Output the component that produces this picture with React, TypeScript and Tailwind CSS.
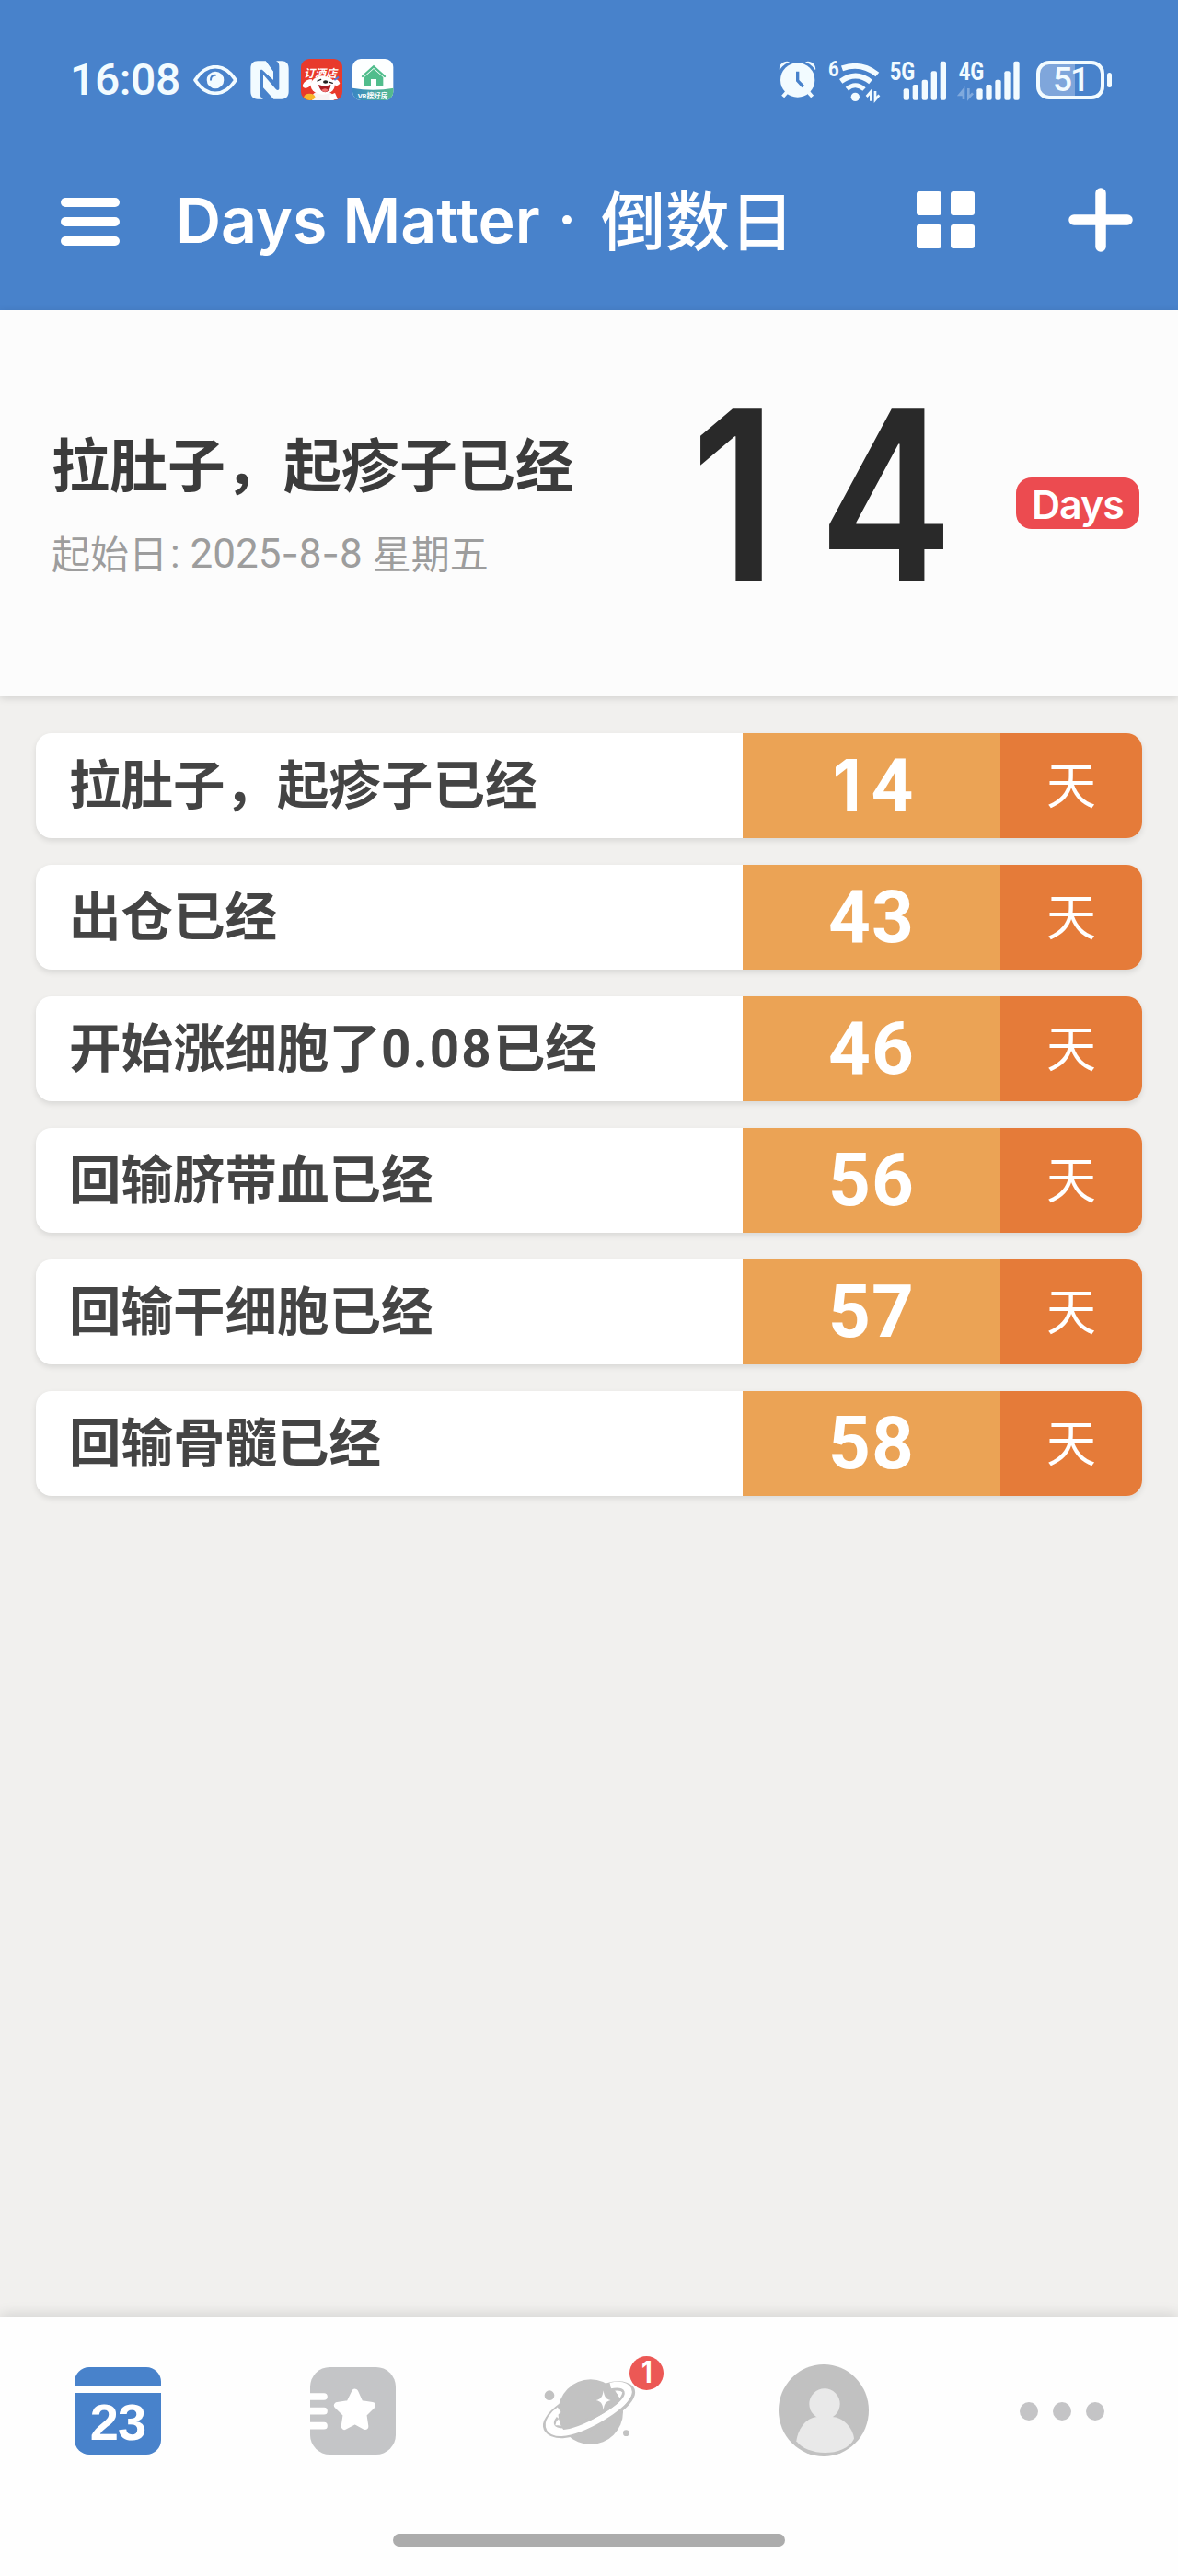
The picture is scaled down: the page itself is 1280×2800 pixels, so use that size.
import React from "react";

const events = [
  { title: "拉肚子，起疹子已经", days: "14" },
  { title: "出仓已经", days: "43" },
  { title: "开始涨细胞了0.08已经", days: "46" },
  { title: "回输脐带血已经", days: "56" },
  { title: "回输干细胞已经", days: "57" },
  { title: "回输骨髓已经", days: "58" },
];

function EyeIcon() {
  return (
    <svg className="ml-[15px] h-8 w-12" viewBox="0 0 144 96">
      <path d="M6 48C24 20 46 5 72 5s48 15 66 43c-18 28-40 43-66 43S24 76 6 48Z" fill="none" stroke="#f2fbff" strokeWidth="11" strokeLinejoin="round" />
      <circle cx="72" cy="48" r="28" fill="#f2fbff" />
      <path d="M57 47c0-9 6-15 15-15" fill="none" stroke="#4882cb" strokeWidth="6" strokeLinecap="round" />
    </svg>
  );
}

function NfcIcon() {
  return (
    <svg className="ml-[14px] h-[42px] w-[42px]" viewBox="0 0 126 126" fill="#f2fbff">
      <path d="M24 1H50L75 36V62L40 31C36 28 32 30 32 35V108C32 117 35 122 42 125H24C9 125 1 116 1 100V26C1 10 9 1 24 1Z" />
      <path d="M102 125H76L42 88V45L84 94C89 98 94 96 94 91V18C94 9 91 4 84 1H102C117 1 125 10 125 26V100C125 116 117 125 102 125Z" />
      <path d="M50 1L75 36V62L50 40Z" />
    </svg>
  );
}

function HotelAppIcon() {
  return (
    <svg className="ml-[13px] h-[45px] w-[45px]" viewBox="0 0 135 135">
      <defs>
        <clipPath id="hotel"><rect width="135" height="135" rx="27" /></clipPath>
      </defs>
      <g clipPath="url(#hotel)">
        <rect width="135" height="135" fill="#e83a2c" />
        <path d="M36 135c-2-22 10-30 35-29s38 8 36 29Z" fill="#f8f3f3" />
        <path d="M36 67C24 65 8 73 5 89c8 11 18 6 30-6ZM102 70c13-7 21-1 25 10-8 10-18 8-25 0Z" fill="#fff" />
        <ellipse cx="71" cy="86" rx="39" ry="30" fill="#fff" />
        <ellipse cx="80" cy="75" rx="8" ry="5" fill="#202020" />
        <path d="M54 72l11-5M94 76l9 3" stroke="#222" strokeWidth="4" strokeLinecap="round" />
        <path d="M57 84c15 5 26 5 40 0-2 33-33 33-40 0Z" fill="#a81d24" />
        <path d="M67 101c8-6 15-6 22 0-6 9-16 9-22 0Z" fill="#f17270" />
        <path d="M109 69l14-10" stroke="#5478d8" strokeWidth="6" />
        <ellipse cx="28" cy="124" rx="18" ry="11" fill="#f8b62c" />
        <path d="M94 118l17-7 9 20-25 4Z" fill="#fff" />
      </g>
      <text x="9" y="60" fill="#fff" fontSize="36" fontWeight="700" fontStyle="italic" fontFamily="Noto Sans CJK SC, sans-serif">订酒店</text>
    </svg>
  );
}

function HouseAppIcon() {
  return (
    <svg className="ml-[11px] h-[45px] w-[45px]" viewBox="0 0 135 135">
      <defs>
        <clipPath id="house"><rect width="133" height="135" rx="27" /></clipPath>
        <linearGradient id="strip"><stop stopColor="#3a86c4" /><stop offset="1" stopColor="#56bd8a" /></linearGradient>
      </defs>
      <g clipPath="url(#house)">
        <rect width="135" height="135" fill="#fdffff" />
        <path d="M0 95Q66 107 135 95V135H0Z" fill="url(#strip)" />
      </g>
      <path d="M33 57L69 25l36 32" fill="none" stroke="#50bd8c" strokeWidth="7" strokeLinecap="round" />
      <path d="M38 60L69 33l31 27v28H78V66H60v22H38Z" fill="#50bd8c" />
      <text x="17" y="128" textLength="98" fill="#fff" fontSize="23" fontWeight="700" fontFamily="Roboto, Noto Sans CJK SC, sans-serif">VR搜好房</text>
    </svg>
  );
}

function AlarmIcon() {
  return (
    <svg className="h-[41px] w-[41px]" viewBox="0 0 123 123">
      <path d="M31 98L14 117M93 98l17 19" stroke="#f2fbff" strokeWidth="12" />
      <circle cx="62" cy="63" r="56" fill="#f2fbff" />
      <path d="M3 31C-1 13 18-4 37 4 21 10 12 18 3 31ZM120 31c4-18-15-35-34-27 16 6 25 14 34 27Z" fill="#f2fbff" />
      <path d="M62 35v30l18 19" fill="none" stroke="#4882cb" strokeWidth="10" />
    </svg>
  );
}

function WifiIcon() {
  return (
    <svg className="ml-[12px] h-[46px] w-[58px] overflow-visible" viewBox="0 0 174 138" fill="none" stroke="#f2fbff">
      <text x="3" y="58" fill="#f2fbff" stroke="none" fontSize="72" fontWeight="700" fontFamily="Roboto, sans-serif" textLength="35" lengthAdjust="spacingAndGlyphs">6</text>
      <path d="M48 31Q111 8 163 51" strokeWidth="18" />
      <path d="M44 73Q94 37 141 75" strokeWidth="17" />
      <path d="M64 98Q92 74 120 99" strokeWidth="15" />
      <circle cx="91" cy="124" r="14" fill="#f2fbff" stroke="none" />
      <path d="M142 137V107l-14 16M156 105v28l13-15" strokeWidth="8" />
    </svg>
  );
}

function SignalIcon({ label, arrows }: { label: string; arrows?: boolean }) {
  const shift = arrows ? 14 : 0;
  return (
    <svg className={arrows ? "ml-[10px] h-[44px] w-[69px] overflow-visible" : "ml-[9px] h-[44px] w-[65px] overflow-visible"} viewBox={arrows ? "0 0 207 132" : "0 0 195 132"}>
      <text x="2" y="67" textLength="83" lengthAdjust="spacingAndGlyphs" fill="#f2fbff" fontSize="85" fontWeight="700" fontFamily="Roboto, sans-serif">{label}</text>
      <g fill="#f2fbff">
        <rect x={47 + shift} y="94" width="19" height="37" rx="6" />
        <rect x={77 + shift} y="81" width="19" height="50" rx="6" />
        <rect x={107 + shift} y="65" width="19" height="66" rx="6" />
        <rect x={137 + shift} y="37" width="19" height="94" rx="6" />
        <rect x={167 + shift} y="5" width="19" height="126" rx="6" />
      </g>
      {arrows && <path d="M18 129V98L5 114h13M34 93v31l14-15" stroke="#80aadd" strokeWidth="8" fill="none" />}
    </svg>
  );
}

function Battery() {
  return (
    <div className="ml-[16px] flex items-center gap-[3px]">
      <div className="flex h-[42px] w-[74px] items-center justify-center rounded-[14px] border-4 border-[#f2fbff] bg-[linear-gradient(90deg,#7fa6db_58%,#4882cb_58%)] font-[Roboto] text-[37px] font-medium leading-none text-[#f2fbff]">
        <span className="-mt-px -tracking-[2px]">51</span>
      </div>
      <div className="h-4 w-[5px] rounded-[3px] bg-[#f2fbff]" />
    </div>
  );
}

function StatusBar() {
  return (
    <div className="flex h-[174px] items-start justify-between pl-[76px] pr-[72px] pt-16">
      <div className="flex h-[45px] items-center">
        <span className="w-[119px] whitespace-nowrap font-[Roboto] text-[48px] font-medium leading-none tracking-[-0.4px] text-[#f2fbff]">16:08</span>
        <EyeIcon />
        <NfcIcon />
        <HotelAppIcon />
        <HouseAppIcon />
      </div>
      <div className="flex h-[45px] items-center">
        <AlarmIcon />
        <WifiIcon />
        <SignalIcon label="5G" />
        <SignalIcon label="4G" arrows />
        <Battery />
      </div>
    </div>
  );
}

function Header() {
  return (
    <header className="h-[337px] bg-[#4882cb]">
      <StatusBar />
      <div className="flex h-[130px] items-center pl-[66px] pr-[49px] text-white">
        <div className="flex w-16 flex-col gap-[11px] pt-1">
          <div className="h-[10px] rounded-full bg-white" />
          <div className="h-[10px] rounded-full bg-white" />
          <div className="h-[10px] rounded-full bg-white" />
        </div>
        <h1 className="ml-[61px] flex flex-1 items-center whitespace-nowrap text-[68px] leading-none">
          <span className="w-[400px] font-[Inter] font-semibold">Days Matter</span>
          <span className="ml-[20px] h-[10px] w-[10px] rounded-full bg-white" />
          <span className="-mt-[5px] ml-[32px] font-['Noto_Sans_CJK_SC'] text-[70px] font-medium">倒数日</span>
        </h1>
        <div className="grid w-[63px] grid-cols-2 gap-[10px]">
          <div className="h-[26px] rounded-[3px] bg-white" />
          <div className="h-[26px] rounded-[3px] bg-white" />
          <div className="h-[26px] rounded-[3px] bg-white" />
          <div className="h-[26px] rounded-[3px] bg-white" />
        </div>
        <svg className="ml-[102px] h-[70px] w-[70px]" viewBox="0 0 70 70">
          <path d="M35 6v58M6 35h58" stroke="#fff" strokeWidth="11.5" strokeLinecap="round" />
        </svg>
      </div>
    </header>
  );
}

function Hero() {
  return (
    <section className="z-10 flex h-[420px] shrink-0 bg-[#fcfcfc] shadow-[0_2px_8px_rgba(0,0,0,0.13)]">
      <div className="w-[700px] pl-[56px] pt-[133px]">
        <h2 className="whitespace-nowrap font-['Noto_Sans_CJK_SC'] text-[63px] font-bold leading-[64px] text-[#3b3b3b]">拉肚子，起疹子已经</h2>
        <p className="mt-[37px] flex items-center whitespace-nowrap font-['Noto_Sans_CJK_SC'] text-[42px] font-normal leading-[52px] text-[#9d9d9d]">
          <span>起始日</span>
          <span className="ml-[3px] mt-[5px] font-[Roboto] text-[44px] font-normal">: 2025</span>
          <span className="mt-1 font-[Inter]">-</span>
          <span className="mt-[5px] font-[Roboto] text-[44px] font-normal">8</span>
          <span className="mt-1 font-[Inter]">-</span>
          <span className="mt-[5px] font-[Roboto] text-[44px] font-normal">8</span>
          <span className="ml-[11px]">星期五</span>
        </p>
      </div>
      <div className="flex w-[404px] pl-[51px] pt-[73px]">
        <span className="origin-left scale-x-[0.85] font-[Inter] text-[258px] font-semibold leading-[256px] tracking-[54px] text-[#292929]">14</span>
      </div>
      <div className="mt-[182px] flex h-14 w-[134px] items-center justify-center rounded-[17px] bg-[#ec4b50] pt-0.5 font-[Inter] text-[43px] font-semibold leading-none -tracking-[1px] text-white">
        Days
      </div>
    </section>
  );
}

function EventRow({ title, days }: { title: string; days: string }) {
  return (
    <li className="flex h-[114px] overflow-hidden rounded-[17px] bg-white shadow-[0_3px_6px_rgba(0,0,0,0.1)]">
      <div className="w-[768px] whitespace-nowrap pl-[36px] font-[Roboto,'Noto_Sans_CJK_SC'] text-[56.5px] font-bold leading-[116px] text-[#444444]">
        {title.split(/([\d.]+)/).map((part, i) => (
          <span key={i} className={i % 2 ? "tracking-[2px]" : ""}>{part}</span>
        ))}
      </div>
      <div className="flex w-[280px] items-center justify-center bg-[#eba355] font-[Roboto] text-[80px] font-bold leading-none tracking-[1px] text-white">
        {days.startsWith("1") ? (
          <span className="flex items-center">
            <span className="flex w-[46px] justify-end pr-[11px] font-[Inter] text-[78px] tracking-normal">
              <span className="origin-right scale-x-[0.92]">1</span>
            </span>
            <span>{days.slice(1)}</span>
          </span>
        ) : (
          days
        )}
      </div>
      <div className="flex flex-1 justify-center bg-[#e57b39] font-['Noto_Sans_CJK_SC'] text-[54px] leading-[108px] text-white">天</div>
    </li>
  );
}

function CalendarIcon() {
  return (
    <div className="flex h-[95px] w-[94px] flex-col gap-[7px] overflow-hidden rounded-[16px]">
      <div className="h-[21px] bg-[#4882cb]" />
      <div className="flex flex-1 items-center justify-center bg-[#4882cb] pb-[3px] font-['Liberation_Sans'] text-[56px] font-bold leading-none -tracking-[1px] text-white">23</div>
    </div>
  );
}

function StarIcon() {
  return (
    <svg className="mr-[2px] h-[95px] w-[93px]" viewBox="0 0 279 285">
      <rect width="279" height="285" rx="64" fill="#c4c5c7" />
      <path d="M-10 96H45M-10 143H45M-10 191H45" stroke="#fff" strokeWidth="23" strokeLinecap="round" />
      <path d="M146 82l17 37 39 6-29 28 6 40-33-18-34 18 6-40-29-28 39-6Z" fill="#fff" stroke="#fff" strokeWidth="22" strokeLinejoin="round" />
    </svg>
  );
}

function PlanetIcon() {
  return (
    <svg className="h-[113px] w-[131px]" viewBox="90 170 393 339">
      <circle cx="245" cy="361" r="106" fill="#c2c2c2" />
      <g fill="none">
        <path d="M296 273C345 258 391 270 384 304C370 355 235 435 155 441C100 443 84 410 104 381C114 364 128 352 146 339" stroke="#c2c2c2" strokeWidth="11" />
        <path d="M310 276C350 266 378 280 368 304C350 347 225 424 150 430C108 431 100 406 116 381C125 368 134 360 143 354" stroke="#fff" strokeWidth="20" />
        <path d="M310 290C340 282 358 290 350 307C330 342 228 401 160 410C126 411 124 398 138 380" stroke="#c2c2c2" strokeWidth="9" />
      </g>
      <path d="M328 296l21 0-8 20ZM135 387l11 18-16 0Z" fill="#fff" />
      <path d="M287 291c3 22 8 28 24 32-16 4-21 10-24 32-3-22-8-28-24-32 16-4 21-10 24-32Z" fill="#fff" />
      <circle cx="111" cy="307" r="16" fill="#c2c2c2" />
      <circle cx="361" cy="430" r="10" fill="#c2c2c2" />
    </svg>
  );
}

function AvatarIcon() {
  return (
    <svg className="mr-[3px] h-[100px] w-[98px]" viewBox="0 0 294 300">
      <ellipse cx="147" cy="150" rx="147" ry="150" fill="#c1c1c1" />
      <circle cx="150" cy="129" r="50" fill="#e9e9e9" />
      <path d="M58 250C64 205 95 171 128 171H174C208 171 242 205 246 242C218 302 94 302 58 250Z" fill="#e9e9e9" />
    </svg>
  );
}

function TabBar() {
  return (
    <nav className="z-10 h-[281px] bg-[#fefefe] shadow-[0_-3px_14px_rgba(0,0,0,0.13)]">
      <div className="grid h-[202px] grid-cols-5 items-center justify-items-center">
        <CalendarIcon />
        <StarIcon />
        <div className="relative ml-[31px] mt-[-12px]">
          <PlanetIcon />
          <span className="absolute right-0 top-[3px] flex h-[37px] w-[37px] items-center justify-center rounded-full bg-[#ec5855] font-[Inter] text-[32px] font-bold leading-none text-white">
            <span className="scale-x-[0.85]">1</span>
          </span>
        </div>
        <AvatarIcon />
        <div className="ml-[4px] mt-[2px] flex gap-4">
          <div className="h-5 w-5 rounded-full bg-[#c4c4c6]" />
          <div className="h-5 w-5 rounded-full bg-[#c4c4c6]" />
          <div className="h-5 w-5 rounded-full bg-[#c4c4c6]" />
        </div>
      </div>
      <div className="mx-auto mt-[33px] h-[14px] w-[426px] rounded-full bg-[#acacac]" />
    </nav>
  );
}

export default function App() {
  return (
    <div className="flex h-[2800px] w-[1280px] flex-col overflow-hidden bg-[#f1f0ee]">
      <Header />
      <Hero />
      <ul className="flex flex-1 flex-col gap-[29px] px-[39px] pt-10">
        {events.map((event) => (
          <EventRow key={event.title} title={event.title} days={event.days} />
        ))}
      </ul>
      <TabBar />
    </div>
  );
}
